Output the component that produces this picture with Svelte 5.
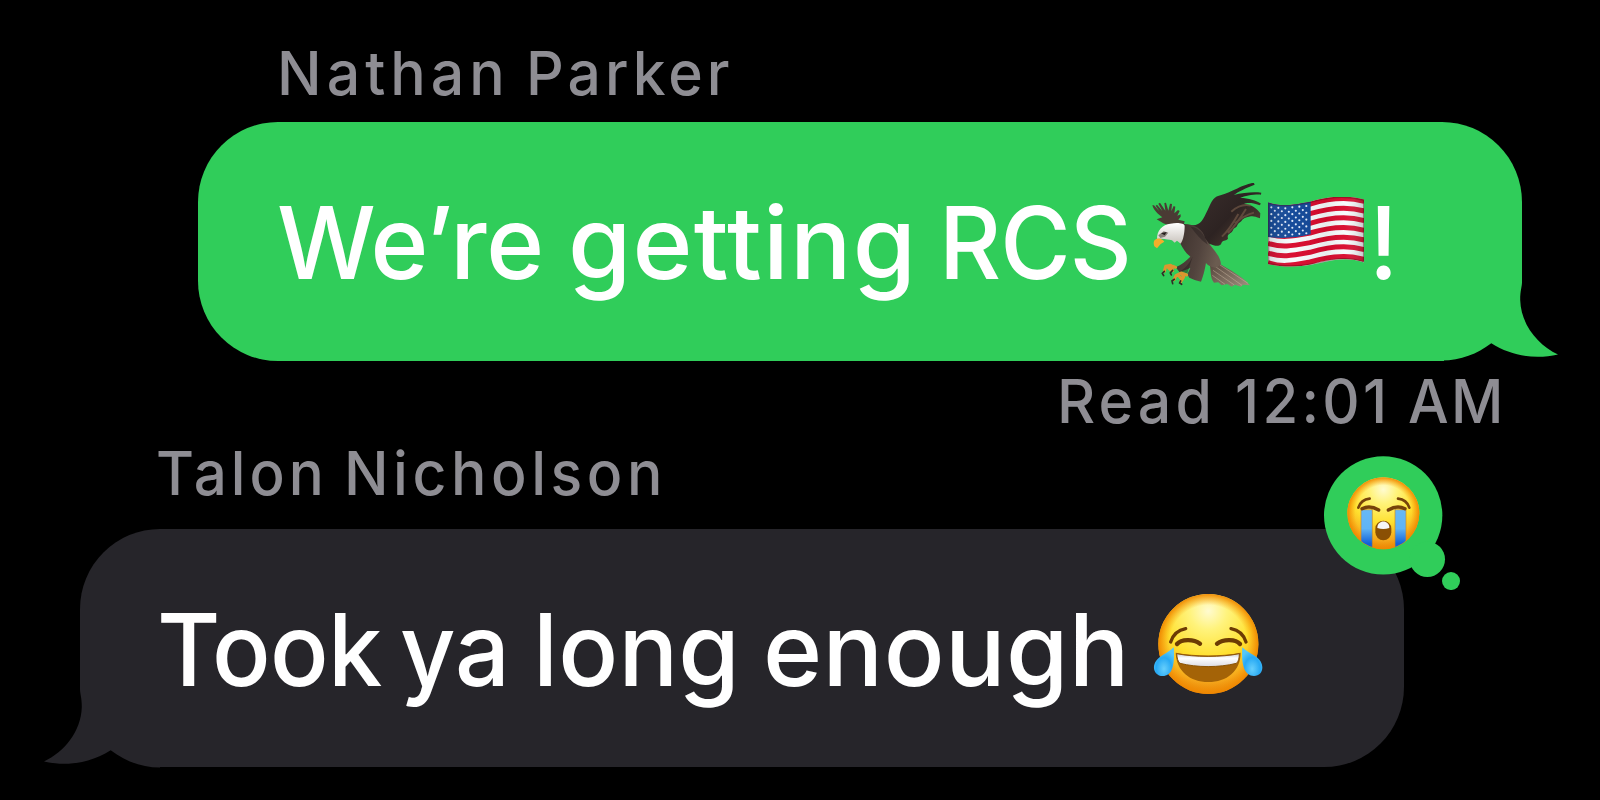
<script>
  const stars = Array.from({ length: 9 }, (_, r) => Array.from({ length: r % 2 ? 5 : 6 }, (_, c) => ({ r, c }))).flat();
  // Each stripe follows the same wave, offset vertically.
  const wave = (y) => `M384 ${y + 18} C425 ${y + 32} 455 ${y + 26} 510 ${y + 16} C570 ${y - 2} 625 ${y - 6} 673 ${y + 8}`;

  // Words with their column width and tracking in pixels, and horizontal scale.
  const sender = [['Nathan', 249, 5.2, 0.967], ['Parker', 200, 4.2, 0.964]];
  const receipt = [['Read', 178, 4.2, 0.968], ['12:01', 173, 3.5, 0.95], ['AM', 100, 2.6, 0.94]];
  const other = [['Talon', 188.5, 4.2, 0.955], ['Nicholson', 320, 4.7, 0.966]];
  const first = [['We’re', 291, -0.4, 0.976], ['getting', 370.5, 1.2, 1.012], ['RCS', 213, -1, 0.95]];
  const second = [['Took', 243, -0.8, 0.962], ['ya', 133, 0, 0.957], ['long', 230, 0.2, 0.983], ['enough', 380, 0.4, 0.998]];
</script>

{#snippet words(list)}
  {#each list as [word, width, tracking, scale]}
    <span class="word" style:width="{width}px"><span class="glyphs" style:letter-spacing="{tracking}px" style:transform="scaleX({scale})">{word}</span></span>{' '}
  {/each}
{/snippet}

<main>
  <section class="sent">
    <p class="label name">{@render words(sender)}</p>
    <div class="bubble green">
      <svg class="tail" viewBox="0 0 116 79" aria-hidden="true">
        <path d="M0 0H80C80 5 78.200 8 78.200 18C79 43 96 63 116 72.500C94 77.500 70 74.500 49.300 61.300C35 72 19 78.500 0 78.500Z" />
      </svg>
      <p class="text">{@render words(first)}</p>
      <svg class="eagle" viewBox="30 30 340 325" aria-label="eagle">
        <defs>
          <linearGradient id="wing" x1="0" y1="0" x2="1" y2="1"><stop offset="0" stop-color="#3d302e" /><stop offset=".5" stop-color="#2d2322" /><stop offset="1" stop-color="#67503e" /></linearGradient>
          <linearGradient id="tailf" x1="0" y1="0" x2="1" y2="1"><stop offset="0" stop-color="#4b3b32" /><stop offset="1" stop-color="#a19180" /></linearGradient>
          <linearGradient id="head" x1="0" y1="0" x2="0" y2="1"><stop offset="0" stop-color="#fff" /><stop offset="1" stop-color="#c9c3bd" /></linearGradient>
          <linearGradient id="body" x1="0" y1="0" x2="1" y2=".3"><stop offset="0" stop-color="#3c302c" /><stop offset=".6" stop-color="#51433d" /><stop offset="1" stop-color="#6b5c50" /></linearGradient>
        </defs>
        <path fill="#4a3b34" d="M70 160L50 148L67 142C54 133 42 122 37 106L42 106L58 124L47 107L51 104L67 123L55 101L60 98L76 122L73 99L78 98L85 122L90 101L96 102L94 124L101 108L106 110L103 130L114 120L119 123L112 137L122 133L122 140L115 149L134 154L130 170L90 168Z" />
        <path fill="url(#wing)" d="M150 165C183 169 188 150 203 120C216 91 222 79 244 75C267 70 319 38 342 39L344 44C319 53 294 66 281 75C310 67 345 65 364 68L363 74C339 73 315 78 301 84C325 84 350 92 363 101L359 106C338 97 321 98 312 101C333 103 353 116 361 130L360 145C347 140 341 138 333 139C325 141 317 141 307 149C300 160 295 157 292 166C289 175 281 173 279 181C272 194 260 190 264 206C255 217 249 205 243 223C233 232 223 226 207 221L213 264L172 250Z" />
        <g fill="none" stroke="#705746" stroke-width="6" opacity=".7"><path d="M246 200Q270 177 295 132M264 189Q290 163 318 117M285 160Q310 137 342 128M274 125Q304 99 332 107" /></g>
        <path fill="url(#tailf)" d="M207 263C245 286 306 315 330 346L309 344L303 350L285 344L275 350L262 342L245 346L235 337L222 338C210 323 213 302 210 287Z" />
        <g stroke="#d1bea8" stroke-width="3" opacity=".45"><path d="M222 287L306 346M219 301L283 345M217 316L255 343M240 285L324 340" /></g>
        <path fill="url(#body)" d="M132 162C164 162 190 179 195 204C211 230 240 253 243 281C229 302 207 290 198 279C194 303 188 324 183 335L172 332L164 330L148 323L142 313L151 294L119 307L107 292C124 285 139 272 151 260C138 250 130 237 120 219Z" />
        <path fill="#251e1d" opacity=".5" d="M158 260L142 310L118 305C142 293 151 272 158 260ZM197 219Q180 208 152 170Q189 174 203 224Z" />
        <path fill="url(#head)" d="M51 208C50 181 68 163 91 161C114 157 132 160 134 167C134 188 130 209 122 221L111 212L104 218L96 211C83 210 72 204 51 208Z" />
        <path fill="#706962" opacity=".8" d="M55 196L71 184L85 188L75 200L61 204Z" />
        <path fill="#241e1c" d="M63 190L80 186L74 196Z" />
        <path fill="#f4ae2b" d="M49 207C59 203 69 209 73 215L62 222L51 235L43 229C39 216 42 210 49 207Z" />
        <path fill="none" stroke="#dc962e" stroke-width="9" stroke-linecap="round" stroke-linejoin="round" d="M107 292L92 286L77 289L73 304M93 287L98 302M81 289L91 299M140 315L123 309L108 317L102 329M124 309L131 321L122 335M115 316L122 324" />
        <path fill="none" stroke="#332b25" stroke-width="5" stroke-linecap="round" d="M73 304L67 310L71 317M98 301L91 309L94 315M103 328L96 333L98 341M122 333L119 339L125 343" />
      </svg>
      <svg class="flag" viewBox="384 82 289 210" aria-label="US flag">
        <defs>
          <clipPath id="flagclip"><path d="M384 98C425 112 455 106 510 96C570 78 625 76 673 90V279C630 263 590 268 540 280C480 294 425 293 384 283Z" /></clipPath>
          <linearGradient id="shade"><stop offset="0" stop-color="#333" stop-opacity=".18" /><stop offset=".25" stop-color="#fff" stop-opacity=".04" /><stop offset=".6" stop-color="#333" stop-opacity=".08" /><stop offset=".8" stop-color="#fff" stop-opacity=".05" /><stop offset="1" stop-color="#333" stop-opacity=".28" /></linearGradient>
        </defs>
        <g clip-path="url(#flagclip)">
          <rect x="384" y="70" width="290" height="230" fill="#f6fbfc" />
          {#each Array(7) as _, i}
            <path d={wave(87 + i * 29)} stroke="#d8062a" stroke-width="15" fill="none" />
          {/each}
          <path fill="#0d4496" d="M384 95Q440 116 512 92V194Q450 210 384 202Z" />
          {#each stars as s}
            <circle cx={394 + s.c * 21 + (s.r % 2) * 10.5} cy={113 + s.r * 10.2 + (s.c < 3 ? s.c * 1.5 : 6 - s.c * 2)} r="3.200" fill="#dfeafa" />
          {/each}
          <rect x="384" y="70" width="290" height="230" fill="url(#shade)" />
          <path d="M384 98C425 112 455 106 510 96C570 78 625 76 673 90V279C630 263 590 268 540 280C480 294 425 293 384 283Z" fill="none" stroke="#4d1015" stroke-opacity=".4" stroke-width="8" />
        </g>
      </svg>
      <p class="text bang"><span class="glyphs">!</span></p>
    </div>
    <p class="label read">{@render words(receipt)}</p>
  </section>
  <section class="received">
    <p class="label name">{@render words(other)}</p>
    <div class="bubble gray">
      <svg class="tail" viewBox="0 0 116 79" aria-hidden="true">
        <path d="M0 0H80C80 5 78.200 8 78.200 18C79 43 96 63 116 72.500C94 77.500 70 74.500 49.300 61.300C35 72 19 78.500 0 78.500Z" />
      </svg>
      <p class="text">{@render words(second)}</p>
      <svg class="joy" viewBox="36 36 332 312" aria-label="face with tears of joy">
        <defs>
          <radialGradient id="face" cx=".5" cy=".17" r=".85"><stop offset="0" stop-color="#fffbd0" /><stop offset=".22" stop-color="#fff37c" /><stop offset=".55" stop-color="#ffe02e" /><stop offset=".82" stop-color="#f6a91c" /><stop offset="1" stop-color="#e27c09" /></radialGradient>
          <radialGradient id="rim"><stop offset=".78" stop-color="#f79a08" stop-opacity="0" /><stop offset="1" stop-color="#ef8700" stop-opacity=".95" /></radialGradient>
          <linearGradient id="teeth" x1="0" y1="0" x2="0" y2="1"><stop offset="0" stop-color="#c9c9d1" /><stop offset=".35" stop-color="#fff" /><stop offset="1" stop-color="#dcdce4" /></linearGradient>
          <radialGradient id="drop" cx=".5" cy=".75" r=".65"><stop offset="0" stop-color="#66cffc" /><stop offset=".6" stop-color="#27a9f4" /><stop offset="1" stop-color="#55c7fa" /></radialGradient>
        </defs>
        <circle cx="202" cy="192" r="150" fill="url(#face)" />
        <circle cx="202" cy="192" r="150" fill="url(#rim)" />
        <g fill="none" stroke="#6c3b04" stroke-width="10" stroke-linecap="round">
          <path d="M89 186C96 164 112 150 134 146M315 186C308 164 292 150 270 146" />
          <path stroke-width="13" d="M108 192C121 177 157 176 177 191M228 191C248 176 284 177 297 192" />
        </g>
        <path fill="#a46307" d="M104 218C161 229 242 229 299 218C299 273 257 306 202 306C147 306 106 273 104 218Z" />
        <path fill="url(#teeth)" stroke="#8c5507" stroke-width="3" d="M107 221C160 232 243 232 295 221C295 235 292 246 286 250C235 263 168 263 117 250C111 246 108 235 107 221Z" />
        <path fill="url(#drop)" d="M98 202C101 237 100 288 65 288C42 288 31 264 45 243C55 228 79 221 98 202Z" />
        <path fill="url(#drop)" d="M304 202C301 237 304 288 339 288C362 288 371 264 358 243C349 228 323 221 304 202Z" />
      </svg>
      <div class="reaction">
        <svg viewBox="42 32 410 404" aria-label="loudly crying face reaction">
          <defs><linearGradient id="stream" x1="0" y1="0" x2="0" y2="1"><stop offset="0" stop-color="#67b8f5" /><stop offset=".5" stop-color="#5fb4f5" /><stop offset=".9" stop-color="#1261d8" /></linearGradient>
          <clipPath id="cryclip"><circle cx="220" cy="204" r="107" /></clipPath></defs>
          <g fill="#30cd5a"><circle cx="219.500" cy="210" r="177.500" /><circle cx="352" cy="342" r="53" /><circle cx="423" cy="407" r="27" /></g>
          <circle cx="220" cy="204" r="108" fill="url(#face)" /><circle cx="220" cy="204" r="108" fill="url(#rim)" />
          <path clip-path="url(#cryclip)" fill="url(#stream)" stroke="#ce8c1e" stroke-width="2" d="M153 193H187V306H153ZM255 193H288V306H255Z" />
          <g fill="none" stroke="#76420a" stroke-width="8" stroke-linecap="round"><path d="M145 187Q153 163 179 160M298 187Q290 163 264 160" /><path stroke-width="10" d="M156 190Q180 178 206 194M285 190Q261 178 235 194" /></g>
          <rect x="196" y="226" width="48" height="59" rx="24" fill="#8a5004" /><path fill="#f6f6f8" d="M202 248C201 222 239 222 238 248Q220 254 202 248Z" />
        </svg>
      </div>
    </div>
  </section>
</main>

<style>
  :global(body) { background: #000; }
  main { width: 1600px; height: 800px; overflow: hidden; background: #000; font-family: Inter, "Liberation Sans", sans-serif; display: flex; flex-direction: column; }
  p { margin: 0; white-space: nowrap; display: flex; }
  .word { display: block; flex: none; }
  .glyphs { display: inline-block; transform-origin: 0 50%; }
  .label { height: 60px; line-height: 60px; font-size: 61px; font-weight: 500; color: #8e8d93; }
  .sent { height: 435px; }
  .sent .name { padding: 43px 0 0 277px; }
  .received .name { padding: 8px 0 0 155.500px; }
  .bubble { position: relative; display: flex; align-items: flex-start; width: 1324px; height: 238.500px; border-radius: 80px; }
  .green { margin: 19px 0 0 198.400px; border-bottom-right-radius: 0; background: linear-gradient(#30cd5a, #30cd5a) 0 0 / 100% 161px no-repeat, linear-gradient(#30cd5a, #30cd5a) 0 0 / 1246px 100% no-repeat; }
  .gray { margin: 25.500px 0 0 79.500px; border-bottom-left-radius: 0; background: linear-gradient(#26252a, #26252a) 0 0 / 100% 161px no-repeat, linear-gradient(#26252a, #26252a) 100% 0 / 1246px 100% no-repeat; }
  .tail { position: absolute; width: 116px; height: 79px; bottom: -.5px; right: -36px; fill: #30cd5a; }
  .gray .tail { right: auto; left: -36px; transform: scaleX(-1); fill: #26252a; }
  .text { color: #fff; font-size: 101px; line-height: 120px; font-weight: 500; padding-top: 60px; flex: none; }
  .green .text { padding-left: 79px; width: 872.500px; }
  .eagle { width: 113.300px; height: 108.300px; margin-top: 58px; flex: none; }
  .flag { width: 96.300px; height: 70px; margin: 75.300px 0 0 5px; flex: none; }
  .green .bang { padding-left: 5px; width: 30px; }
  .bang .glyphs { transform: scaleX(.95); }
  .gray .text { padding-left: 77px; width: 872.500px; }
  .joy { width: 110.700px; height: 104px; margin: 63px 0 0 123.500px; flex: none; }
  .read { padding: 10.500px 0 0 1057px; }
  .reaction { position: absolute; left: 1244.600px; top: -73px; width: 136.700px; height: 134.700px; }
  .reaction svg { display: block; width: 100%; height: 100%; }
</style>
